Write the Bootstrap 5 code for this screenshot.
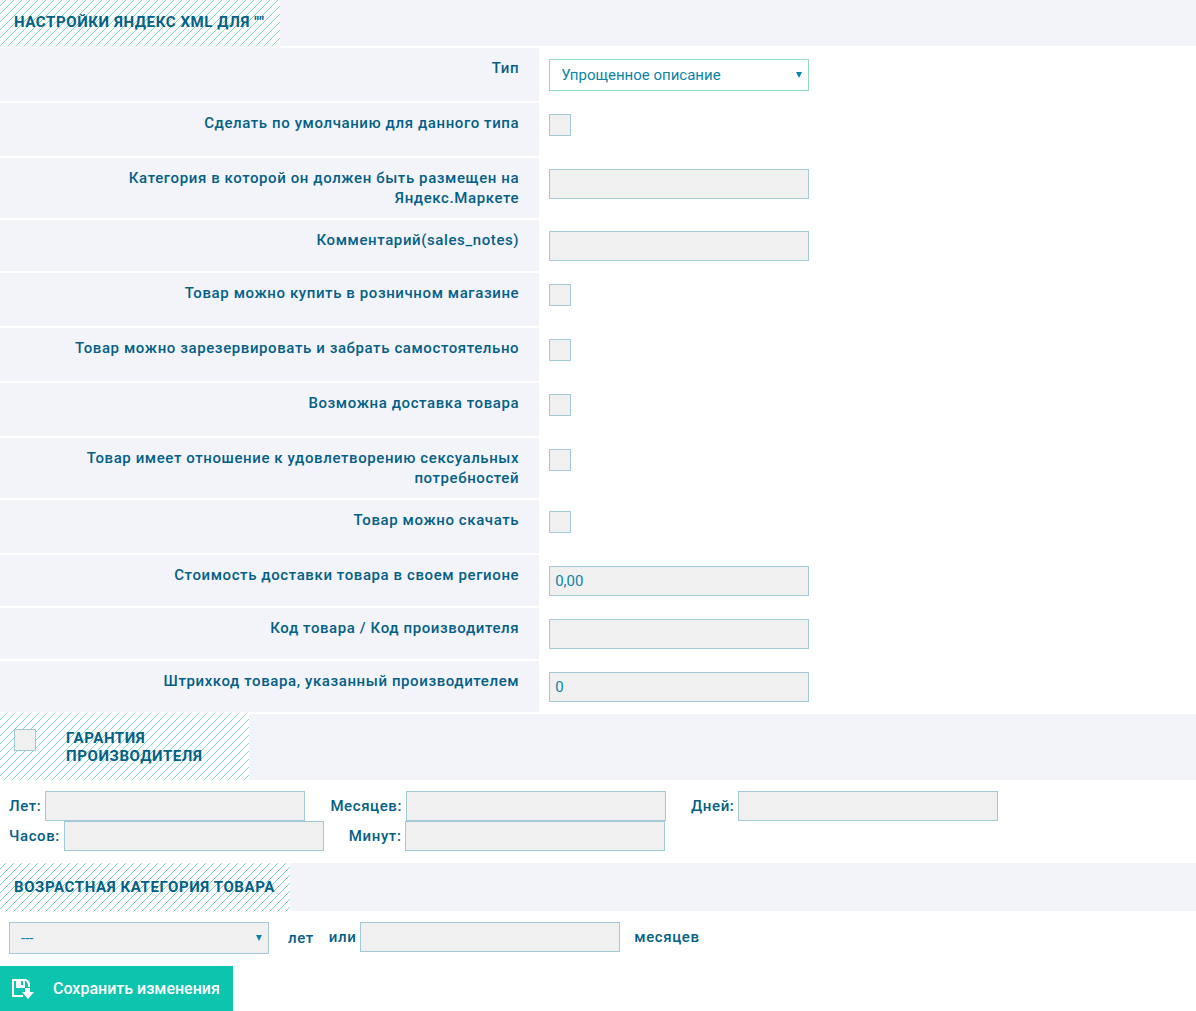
<!DOCTYPE html>
<html lang="ru">
<head>
<meta charset="utf-8">
<meta name="viewport" content="width=device-width, initial-scale=1">
<title>Настройки Яндекс XML</title>
<link href="https://cdn.jsdelivr.net/npm/bootstrap@5.3.0/dist/css/bootstrap.min.css" rel="stylesheet">
<style>
:root{--ink:#046086;--field-ink:#0a84a8;--panel:#f3f4fa;--edge:#a3c8d6;--mint:#8fdcc9}
body{font-family:Roboto,"Noto Sans",sans-serif;font-size:15px;line-height:20px;font-weight:500;letter-spacing:.04em;color:var(--ink);background:#fff}
.section-bar{background:var(--panel)}
.section-title{font-size:15px;line-height:18px;font-weight:700;text-transform:uppercase;margin:0;padding:15px 14px;background-color:#fff;
background-image:url("data:image/svg+xml,%3Csvg xmlns='http://www.w3.org/2000/svg' width='8' height='8'%3E%3Cpath fill='none' stroke='%2383d9c3' d='M-1 7L7-1M5 9L9 5'/%3E%3C/svg%3E")}
.title-xml{min-width:280px;padding:13px 14px 15px}
.title-warranty{width:249px;gap:30px}
.title-age{min-width:290px}
.settings-rows{gap:2px;padding:2px 0}
.name-cell{width:calc(45% + 1px);flex:none;background:var(--panel);padding:10px 20px;text-align:right}
.value-cell{padding:11px 10px 10px}
.field{width:260px;height:30px;padding:0 5px;border:1px solid var(--edge);border-radius:0;background-color:#f0f0f0;color:var(--field-ink);font-size:15px;font-weight:400;line-height:20px;letter-spacing:0}
.field-select{height:32px;padding:0 24px 0 11px;appearance:none;background-repeat:no-repeat;background-position:right 6px center;
background-image:url("data:image/svg+xml,%3Csvg xmlns='http://www.w3.org/2000/svg' width='6' height='8'%3E%3Cpath fill='%230a84a8' d='M0 1h6L3 7z'/%3E%3C/svg%3E")}
.field-open{background-color:#fff;border-color:var(--mint)}
.tick{appearance:none;width:22px;height:22px;margin:0;border:1px solid var(--edge);background:#f0f0f0;flex:none}
.tick:checked{background:var(--field-ink)}
.value-cell .tick{margin-bottom:10px}
.term-list{padding:11px 9px 12px}
.term{margin-right:25px;gap:4px}
.age-row{padding:11px 9px 12px;column-gap:15px}
.age-years{gap:19px}
.age-months{gap:4px}
.age-unit{margin-left:10px}
.save-btn{height:45px;padding:0 13px 0 11px;gap:18px;border:0;border-radius:0;background:#0dc4ae;color:#fff;font-size:16px;font-weight:500;letter-spacing:0}
.save-btn:hover{background:#0bb09c;color:#fff}
</style>
</head>
<body>
<form>
<header class="section-bar d-flex"><h2 class="section-title title-xml">Настройки Яндекс XML для ""</h2></header>
<div class="settings-rows d-flex flex-column">
<div class="d-flex"><label class="name-cell" for="kind">Тип</label><div class="value-cell d-flex align-items-start"><select id="kind" class="field field-select field-open"><option>Упрощенное описание</option></select></div></div>
<div class="d-flex"><label class="name-cell" for="def">Сделать по умолчанию для данного типа</label><div class="value-cell d-flex align-items-start"><input id="def" type="checkbox" class="tick"></div></div>
<div class="d-flex"><label class="name-cell" for="cat">Категория в которой он должен быть размещен на Яндекс.Маркете</label><div class="value-cell d-flex align-items-start"><input id="cat" type="text" class="field"></div></div>
<div class="d-flex"><label class="name-cell" for="notes">Комментарий(sales_notes)</label><div class="value-cell d-flex align-items-start"><input id="notes" type="text" class="field"></div></div>
<div class="d-flex"><label class="name-cell" for="store">Товар можно купить в розничном магазине</label><div class="value-cell d-flex align-items-start"><input id="store" type="checkbox" class="tick"></div></div>
<div class="d-flex"><label class="name-cell" for="pickup">Товар можно зарезервировать и забрать самостоятельно</label><div class="value-cell d-flex align-items-start"><input id="pickup" type="checkbox" class="tick"></div></div>
<div class="d-flex"><label class="name-cell" for="delivery">Возможна доставка товара</label><div class="value-cell d-flex align-items-start"><input id="delivery" type="checkbox" class="tick"></div></div>
<div class="d-flex"><label class="name-cell" for="adult">Товар имеет отношение к удовлетворению сексуальных потребностей</label><div class="value-cell d-flex align-items-start"><input id="adult" type="checkbox" class="tick"></div></div>
<div class="d-flex"><label class="name-cell" for="download">Товар можно скачать</label><div class="value-cell d-flex align-items-start"><input id="download" type="checkbox" class="tick"></div></div>
<div class="d-flex"><label class="name-cell" for="cost">Стоимость доставки товара в своем регионе</label><div class="value-cell d-flex align-items-start"><input id="cost" type="text" class="field" value="0,00"></div></div>
<div class="d-flex"><label class="name-cell" for="code">Код товара / Код производителя</label><div class="value-cell d-flex align-items-start"><input id="code" type="text" class="field"></div></div>
<div class="d-flex"><label class="name-cell" for="barcode">Штрихкод товара, указанный производителем</label><div class="value-cell d-flex align-items-start"><input id="barcode" type="text" class="field" value="0"></div></div>
</div>
<div class="section-bar d-flex"><h2 class="section-title title-warranty d-flex align-items-start"><input id="warranty" type="checkbox" class="tick"><label for="warranty">Гарантия производителя</label></h2></div>
<div class="term-list">
<div class="d-flex flex-wrap">
<div class="term d-flex align-items-center"><label for="years">Лет:</label><input id="years" type="text" class="field"></div>
<div class="term d-flex align-items-center"><label for="months">Месяцев:</label><input id="months" type="text" class="field"></div>
<div class="term d-flex align-items-center"><label for="days">Дней:</label><input id="days" type="text" class="field"></div>
</div>
<div class="d-flex flex-wrap">
<div class="term d-flex align-items-center"><label for="hours">Часов:</label><input id="hours" type="text" class="field"></div>
<div class="term d-flex align-items-center"><label for="minutes">Минут:</label><input id="minutes" type="text" class="field"></div>
</div>
</div>
<div class="section-bar d-flex"><h2 class="section-title title-age">Возрастная категория товара</h2></div>
<div class="age-row d-flex flex-wrap align-items-start">
<div class="age-years d-flex align-items-center"><select id="age" class="field field-select"><option>---</option></select><label for="age">лет</label></div>
<div class="age-months d-flex align-items-center"><label for="age-months">или</label><input id="age-months" type="text" class="field"><label for="age-months" class="age-unit">месяцев</label></div>
</div>
<button type="submit" class="btn save-btn d-flex align-items-center">
<svg width="24" height="22" viewBox="0 0 24 22" fill="#fff" aria-hidden="true"><path fill-rule="evenodd" d="M1 1h14l3 2 1 3v3h-2V6l-2-3h-1v7H5V3H3v14h9v2H1zM10 3v4h2V3z"/><path d="M14 10h5v4h4l-6 7-6-7h3z"/></svg>
<span>Сохранить изменения</span></button>
</form>
<script src="https://cdn.jsdelivr.net/npm/bootstrap@5.3.0/dist/js/bootstrap.bundle.min.js"></script>
</body>
</html>
